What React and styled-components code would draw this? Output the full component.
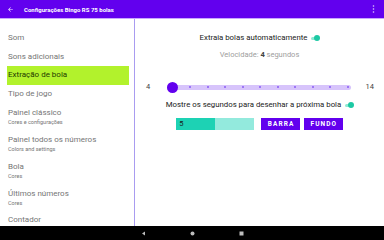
import React from "react";
import styled, { createGlobalStyle } from "styled-components";

const Global = createGlobalStyle`
  html, body { margin: 0; padding: 0; }
  body { font-family: Roboto, "Noto Sans", sans-serif; background: #fff; }
  #root { width: 384px; height: 240px; overflow: hidden; }
`;

const Screen = styled.div`
  width: 384px;
  height: 240px;
  display: flex;
  flex-direction: column;
`;

const AppBar = styled.div`
  height: 19px;
  background: #6200ee;
  border-bottom: 1px solid #c9a6ff;
  display: flex;
  align-items: center;
  padding: 0 9px 0 7px;
  color: #fff;
  box-sizing: border-box;
`;

const Title = styled.span`
  font-size: 6px;
  font-weight: 700;
  margin-left: 10px;
  flex: 1;
`;

const Body = styled.div`
  flex: 1;
  display: flex;
  min-height: 0;
`;

const Side = styled.div`
  width: 135px;
  border-right: 1.5px solid #a99cf0;
  padding-top: 10px;
  box-sizing: border-box;
  overflow: hidden;
`;

const Item = styled.div`
  margin: 0 5px 0 7px;
  padding: ${p => (p.$sub ? "4.5px 0 4.5px 1px" : "4.25px 0 4.25px 1px")};
  background: ${p => (p.$active ? "#b2f22c" : "transparent")};
  color: ${p => (p.$active ? "#1f3a00" : "#757575")};
`;

const ItemTitle = styled.div`
  font-size: 8px;
  line-height: 10px;
`;

const ItemSub = styled.div`
  font-size: 5.5px;
  line-height: 7px;
  margin-top: 1px;
`;

const Main = styled.div`
  flex: 1;
  display: flex;
  flex-direction: column;
  align-items: center;
  padding-top: 14px;
  font-size: 7.8px;
  line-height: 10px;
  color: #212121;
`;

const Row = styled.div`
  display: flex;
  align-items: center;
  gap: 4px;
  margin-top: ${p => p.$mt || 0}px;
`;

const Speed = styled.div`
  color: #9e9e9e;
  font-size: 7.5px;
  margin-top: 7px;
  b { color: #424242; }
`;

const SliderRow = styled.div`
  display: flex;
  align-items: center;
  width: 100%;
  height: 11px;
  margin-top: 21.5px;
  padding: 0 10px 0 11px;
  box-sizing: border-box;
  color: #424242;
  font-size: 7.5px;
`;

const Track = styled.div`
  position: relative;
  flex: 1;
  height: 5px;
  background: #d7c4fb;
  border-radius: 3px;
  margin: 0 15px 0 17px;
  display: flex;
  justify-content: space-between;
  align-items: center;
  padding: 0 2px 0 4.5px;
`;

const Dot = styled.span`
  width: 2px;
  height: 2px;
  border-radius: 50%;
  background: ${p => (p.$hidden ? "transparent" : "#8a5cf5")};
`;

const Thumb = styled.span`
  position: absolute;
  left: 0;
  top: -3px;
  width: 11px;
  height: 11px;
  border-radius: 50%;
  background: #6200ee;
`;

const Switch = styled.span`
  position: relative;
  width: 8px;
  height: 3px;
  border-radius: 2px;
  background: #8fe9d3;
  display: inline-block;
  &::after {
    content: "";
    position: absolute;
    right: -1px;
    top: -1.5px;
    width: 6px;
    height: 6px;
    border-radius: 50%;
    background: #1dc9a4;
  }
`;

const Controls = styled.div`
  display: flex;
  align-items: center;
  margin-top: 8px;
`;

const Progress = styled.div`
  width: 78px;
  height: 12px;
  background: #93eadd;
  display: flex;
`;

const Fill = styled.div`
  background: #1dd2b4;
  color: #1a1a1a;
  font-size: 7.5px;
  line-height: 12px;
  padding-left: 3px;
  box-sizing: border-box;
`;

const Button = styled.div`
  background: #6200ee;
  color: #fff;
  font-size: 6.5px;
  font-weight: 700;
  letter-spacing: 1.1px;
  padding: 0 5.5px 0 6.5px;
  height: 12px;
  line-height: 12px;
  margin-left: ${p => p.$gap}px;
`;

const NavBar = styled.div`
  height: 14px;
  background: #000;
  display: flex;
  align-items: center;
  justify-content: center;
  gap: 44px;
`;

const items = [
  { t: "Som" },
  { t: "Sons adicionais" },
  { t: "Extração de bola", active: true },
  { t: "Tipo de jogo" },
  { t: "Painel clássico", s: "Cores e configurações" },
  { t: "Painel todos os números", s: "Colors and settings" },
  { t: "Bola", s: "Cores" },
  { t: "Últimos números", s: "Cores" },
  { t: "Contador" },
];

export default function App() {
  return (
    <Screen>
      <Global />
      <AppBar>
        <svg width="7" height="7" viewBox="0 0 24 24">
          <path d="M20 11H7.8l5.6-5.6L12 4l-8 8 8 8 1.4-1.4L7.8 13H20z" fill="#fff" />
        </svg>
        <Title>Configurações Bingo RS 75 bolas</Title>
        <svg width="3" height="8" viewBox="0 0 3 8">
          <circle cx="1.5" cy="1" r="0.8" fill="#fff" opacity="0.8" />
          <circle cx="1.5" cy="4" r="0.8" fill="#fff" opacity="0.8" />
          <circle cx="1.5" cy="7" r="0.8" fill="#fff" opacity="0.8" />
        </svg>
      </AppBar>
      <Body>
        <Side>
          {items.map((it, i) => (
            <Item key={i} $active={it.active} $sub={!!it.s}>
              <ItemTitle>{it.t}</ItemTitle>
              {it.s && <ItemSub>{it.s}</ItemSub>}
            </Item>
          ))}
        </Side>
        <Main>
          <Row>
            Extraia bolas automaticamente <Switch />
          </Row>
          <Speed>
            Velocidade: <b>4</b> segundos
          </Speed>
          <SliderRow>
            <span>4</span>
            <Track>
              <Thumb />
              {Array.from({ length: 11 }).map((_, i) => (
                <Dot key={i} $hidden={i === 0} />
              ))}
            </Track>
            <span>14</span>
          </SliderRow>
          <Row $mt={7.5}>
            Mostre os segundos para desenhar a próxima bola <Switch />
          </Row>
          <Controls>
            <Progress>
              <Fill style={{ width: "50%" }}>5</Fill>
            </Progress>
            <Button $gap={7}>BARRA</Button>
            <Button $gap={4}>FUNDO</Button>
          </Controls>
        </Main>
      </Body>
      <NavBar>
        <svg width="5" height="5" viewBox="0 0 10 10">
          <path d="M8 1 L2 5 L8 9 Z" fill="#bdbdbd" />
        </svg>
        <svg width="5" height="5" viewBox="0 0 10 10">
          <circle cx="5" cy="5" r="4" fill="#bdbdbd" />
        </svg>
        <svg width="5" height="5" viewBox="0 0 10 10">
          <rect x="1" y="1" width="8" height="8" fill="#bdbdbd" />
        </svg>
      </NavBar>
    </Screen>
  );
}
